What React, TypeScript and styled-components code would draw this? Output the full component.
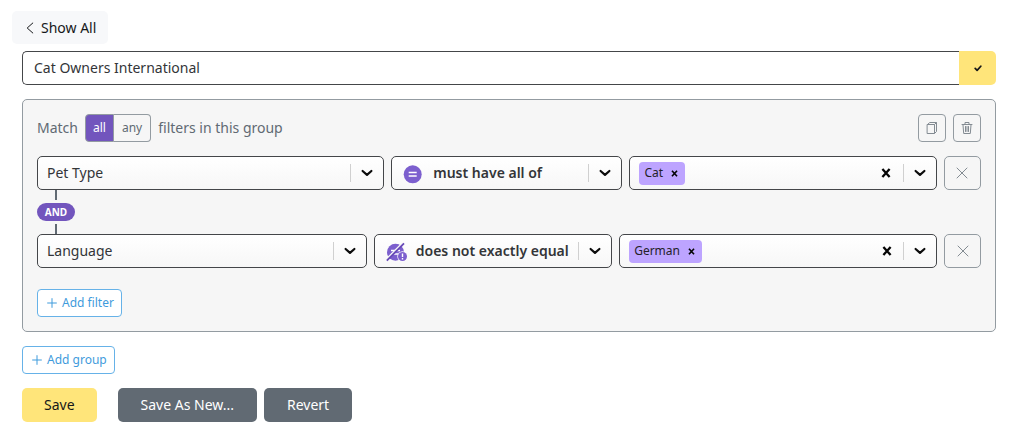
import React, { useState } from 'react';
import styled, { createGlobalStyle } from 'styled-components';

const color = {
  ink: '#333538',
  outline: '#444649',
  slate: '#616a73',
  muted: '#939ba1',
  purple: '#7255bd',
  lilac: '#bda4ff',
  blue: '#3f9bdc',
  yellow: '#ffe57a',
};

const GlobalStyle = createGlobalStyle`
  *, *::before, *::after { box-sizing: border-box; }
  body { margin: 0; background: #fff; }
  body, button, input, select {
    font-family: "Noto Sans", sans-serif;
    font-size: 14px;
    line-height: 20px;
    color: ${color.ink};
  }
  button { cursor: pointer; }
`;

const Page = styled.main`
  display: flex;
  flex-direction: column;
  align-items: stretch;
  padding: 11px 28px 16px 22px;
`;

const BackButton = styled.button`
  display: flex;
  align-items: center;
  align-self: flex-start;
  gap: 7px;
  height: 33px;
  margin: 0 0 7px -10px;
  padding: 0 12px 0 14px;
  border: 0;
  border-radius: 5px;
  background: #f7f8fa;
  color: #161719;
`;

const TitleBar = styled.form`
  display: flex;
  height: 34px;
  margin-bottom: 14px;
`;

const TitleInput = styled.input`
  flex: 1;
  min-width: 0;
  padding: 0 11px;
  border: 1px solid ${color.outline};
  border-right: 0;
  border-radius: 5px 0 0 5px;
  background: #fff;
`;

const ConfirmButton = styled.button`
  display: grid;
  place-items: center;
  width: 37px;
  padding: 0;
  border: 0;
  border-radius: 0 5px 5px 0;
  background: ${color.yellow};
  color: #161719;
`;

const Group = styled.section`
  padding: 14px;
  border: 1px solid ${color.muted};
  border-radius: 5px;
  background: #f6f6f6;
`;

const GroupHeader = styled.header`
  display: flex;
  align-items: center;
  gap: 7px;
  margin-bottom: 14px;
  color: ${color.slate};
`;

const Toggle = styled.div`
  display: flex;
  height: 28px;
`;

const ToggleButton = styled.button<{ $active: boolean }>`
  padding: 0 7px;
  border: 1px solid ${color.muted};
  background: ${(p) => (p.$active ? color.purple : 'transparent')};
  color: ${(p) => (p.$active ? '#fff' : color.slate)};
  font-size: 12px;
  &:first-child { border-radius: 4px 0 0 4px; }
  &:last-child { padding: 0 8px; border-left: 0; border-radius: 0 4px 4px 0; }
`;

const HeaderActions = styled.div`
  display: flex;
  gap: 7px;
  margin-left: auto;
`;

const IconButton = styled.button<{ $large?: boolean }>`
  display: grid;
  flex: none;
  place-items: center;
  width: ${(p) => (p.$large ? 37 : 28)}px;
  height: ${(p) => (p.$large ? 34 : 28)}px;
  padding: 0;
  border: 1px solid ${color.muted};
  border-radius: ${(p) => (p.$large ? 5 : 4)}px;
  background: transparent;
  color: #838b92;
`;

const FilterRow = styled.div`
  display: flex;
  gap: 7px;
`;

const Control = styled.div<{ $grow: number }>`
  display: grid;
  grid-template-columns: 1fr auto;
  flex: ${(p) => p.$grow} 1 0;
  align-items: center;
  min-width: 0;
  height: 34px;
  border: 1px solid ${color.outline};
  border-radius: 5px;
  background: linear-gradient(#fff, #f7f7f7);
  color: #0c0c0c;
`;

const Select = styled.select<{ $withIcon?: boolean }>`
  grid-area: 1 / 1 / 2 / -1;
  width: 100%;
  height: 32px;
  padding: 0 34px 0 ${(p) => (p.$withIcon ? 41 : 9)}px;
  border: 0;
  background: transparent;
  appearance: none;
  font-weight: ${(p) => (p.$withIcon ? 600 : 400)};
`;

const LeadingIcon = styled.span`
  display: flex;
  grid-area: 1 / 1;
  padding: 2px 0 0 11px;
  pointer-events: none;
`;

const Indicator = styled.span`
  display: grid;
  grid-area: 1 / 2;
  place-items: center;
  width: 33px;
  height: 18px;
  border-left: 1px solid #d0d0d0;
  pointer-events: none;
`;

const ValueArea = styled.div`
  display: flex;
  grid-area: 1 / 1;
  align-items: center;
  min-width: 0;
  padding-left: 9px;
`;

const Chip = styled.span`
  display: flex;
  flex: none;
  align-items: center;
  height: 23px;
  padding-left: 5px;
  border-radius: 4px;
  background: ${color.lilac};
  color: #242128;
  font-size: 12px;
`;

const PlainButton = styled.button<{ $width: number }>`
  display: grid;
  flex: none;
  place-items: center;
  width: ${(p) => p.$width}px;
  height: 23px;
  padding: 0;
  border: 0;
  background: transparent;
  color: #050505;
`;

const ValueInput = styled.input`
  flex: 1;
  min-width: 0;
  padding: 0 4px;
  border: 0;
  outline: 0;
  background: transparent;
`;

const MenuButton = styled.button`
  display: grid;
  place-items: center;
  width: 33px;
  height: 18px;
  padding: 0;
  border: 0;
  border-left: 1px solid #d0d0d0;
  background: transparent;
  color: inherit;
`;

const Connector = styled.div`
  display: flex;
  flex-direction: column;
  align-items: center;
  justify-content: space-between;
  width: 38px;
  height: 44px;
  &::before, &::after {
    content: "";
    width: 2px;
    height: 10px;
    background: ${color.slate};
  }
`;

const ConnectorLabel = styled.span`
  width: 100%;
  border-radius: 9px;
  background: ${color.purple};
  color: #fff;
  font-size: 10px;
  font-weight: 700;
  line-height: 18px;
  text-align: center;
`;

const AddButton = styled.button<{ $top: number }>`
  display: flex;
  align-items: center;
  gap: 5px;
  width: max-content;
  height: 28px;
  margin-top: ${(p) => p.$top}px;
  padding: 0 7px 0 9px;
  border: 1px solid #66b2e8;
  border-radius: 4px;
  background: #fff;
  color: ${color.blue};
  font-size: 12px;
`;

const Footer = styled.footer`
  display: flex;
  gap: 7px;
  margin-top: 14px;
`;

const FooterButton = styled.button<{ $primary?: boolean }>`
  height: 34px;
  margin-right: ${(p) => (p.$primary ? 14 : 0)}px;
  padding: 0 ${(p) => (p.$primary ? 22 : 23)}px;
  border: 0;
  border-radius: 5px;
  background: ${(p) => (p.$primary ? color.yellow : color.slate)};
  color: ${(p) => (p.$primary ? '#161719' : '#fff')};
`;

const Stroke = ({ d, w, h, width = 1 }: { d: string; w: number; h: number; width?: number }) => (
  <svg width={w} height={h} viewBox={`0 0 ${w} ${h}`} fill="none" stroke="currentColor"
    strokeWidth={width} strokeLinecap="round" strokeLinejoin="round" aria-hidden="true">
    <path d={d} />
  </svg>
);

const Chevron = () => <Stroke w={12} h={8} width={2.2} d="M1.6 2 6 5.9 10.4 2" />;
const Plus = () => <Stroke w={10} h={10} d="M5 .6v8.8M.6 5h8.8" />;
const ThinCross = () => <Stroke w={12} h={12} d="m1 1 10 10M11 1 1 11" />;

const BoldCross = ({ size }: { size: number }) => (
  <svg width={size} height={size} viewBox="0 0 10 10" fill="none" stroke="currentColor"
    strokeWidth="2.3" aria-hidden="true">
    <path d="m1.4 1 7.2 8M8.6 1 1.4 9" />
  </svg>
);

const CopyIcon = () => (
  <Stroke w={12} h={14} d="M1.5 3.5h7v9h-7zM1.8 3.2 3.8 1.5h6.7v9L8.8 12.2M8.7 3.3l1.6-1.6" />
);

const TrashIcon = () => (
  <Stroke w={12} h={14} d="M1 3.5h10M4 3V1.5h4V3M2 3.8l.7 8.7h6.6l.7-8.7M4.5 5.5v5M6 5.5v5M7.5 5.5v5" />
);

const EqualIcon = () => (
  <svg width="20" height="20" viewBox="0 0 20 20" aria-hidden="true">
    <circle cx="9.7" cy="10.3" r="9" fill="#7c5fce" />
    <path d="M5.7 8.6h8M5.7 12h8" stroke="#fff" strokeWidth="1.5" />
  </svg>
);

const NotExactlyIcon = () => (
  <svg width="22" height="20" viewBox="0 0 22 20" aria-hidden="true">
    <circle cx="9.5" cy="10.2" r="8.5" fill="#7c5fce" />
    <path d="M5 8.4h9M5 12h8" stroke="#fff" strokeWidth="1.5" />
    <path d="M.8 17 17 .8" stroke="#f9f9f9" strokeWidth="2" />
    <path d="M.8 18.6 18 1.4" stroke="#6749b7" strokeWidth="1.8" />
    <circle cx="16.5" cy="14.5" r="5.2" fill="#fafafa" />
    <circle cx="16.5" cy="14.5" r="4.5" fill="#7c5fce" />
    <path d="M16.5 11.6v3.4M16.5 16.1v1.3" stroke="#fff" strokeWidth="1.4" />
  </svg>
);

interface Filter {
  field: string;
  operator: string;
  icon: React.ReactNode;
  value: string;
  grow: [number, number, number];
}

const initialFilters: Filter[] = [
  { field: 'Pet Type', operator: 'must have all of', icon: <EqualIcon />, value: 'Cat', grow: [348, 231, 308] },
  { field: 'Language', operator: 'does not exactly equal', icon: <NotExactlyIcon />, value: 'German', grow: [330, 238, 318] },
];

const FilterEditor = ({ filter }: { filter: Filter }) => {
  const [values, setValues] = useState([filter.value]);
  return (
    <FilterRow>
      <Control $grow={filter.grow[0]}>
        <Select aria-label="Field" defaultValue={filter.field}>
          <option>{filter.field}</option>
        </Select>
        <Indicator><Chevron /></Indicator>
      </Control>
      <Control $grow={filter.grow[1]}>
        <Select $withIcon aria-label="Operator" defaultValue={filter.operator}>
          <option>{filter.operator}</option>
        </Select>
        <LeadingIcon>{filter.icon}</LeadingIcon>
        <Indicator><Chevron /></Indicator>
      </Control>
      <Control $grow={filter.grow[2]}>
        <ValueArea>
          {values.map((value) => (
            <Chip key={value}>
              {value}
              <PlainButton $width={22} type="button" aria-label={`Remove ${value}`}
                onClick={() => setValues(values.filter((v) => v !== value))}>
                <BoldCross size={7} />
              </PlainButton>
            </Chip>
          ))}
          <ValueInput aria-label="Values" />
          <PlainButton $width={33} type="button" aria-label="Clear values" onClick={() => setValues([])}>
            <BoldCross size={10} />
          </PlainButton>
        </ValueArea>
        <MenuButton type="button" aria-label="Show values"><Chevron /></MenuButton>
      </Control>
      <IconButton $large type="button" aria-label="Remove filter"><ThinCross /></IconButton>
    </FilterRow>
  );
};

export default function App() {
  const [match, setMatch] = useState('all');
  return (
    <>
      <GlobalStyle />
      <Page>
        <BackButton type="button">
          <Stroke w={8} h={12} d="M6.8 1 1.2 6l5.6 5" />
          Show All
        </BackButton>
        <TitleBar onSubmit={(e) => e.preventDefault()}>
          <TitleInput aria-label="Segment name" defaultValue="Cat Owners International" />
          <ConfirmButton type="submit" aria-label="Confirm name">
            <Stroke w={8} h={8} width={1.7} d="M1.2 4.4 3.1 6.4 6.8 2.2" />
          </ConfirmButton>
        </TitleBar>
        <Group>
          <GroupHeader>
            <span>Match</span>
            <Toggle role="group" aria-label="Match mode">
              {['all', 'any'].map((mode) => (
                <ToggleButton key={mode} type="button" $active={match === mode}
                  aria-pressed={match === mode} onClick={() => setMatch(mode)}>
                  {mode}
                </ToggleButton>
              ))}
            </Toggle>
            <span>filters in this group</span>
            <HeaderActions>
              <IconButton type="button" aria-label="Duplicate group"><CopyIcon /></IconButton>
              <IconButton type="button" aria-label="Delete group"><TrashIcon /></IconButton>
            </HeaderActions>
          </GroupHeader>
          {initialFilters.map((filter, i) => (
            <React.Fragment key={filter.field}>
              {i > 0 && <Connector><ConnectorLabel>AND</ConnectorLabel></Connector>}
              <FilterEditor filter={filter} />
            </React.Fragment>
          ))}
          <AddButton $top={21} type="button"><Plus />Add filter</AddButton>
        </Group>
        <AddButton $top={14} type="button"><Plus />Add group</AddButton>
        <Footer>
          <FooterButton $primary type="button">Save</FooterButton>
          <FooterButton type="button">Save As New...</FooterButton>
          <FooterButton type="button">Revert</FooterButton>
        </Footer>
      </Page>
    </>
  );
}
